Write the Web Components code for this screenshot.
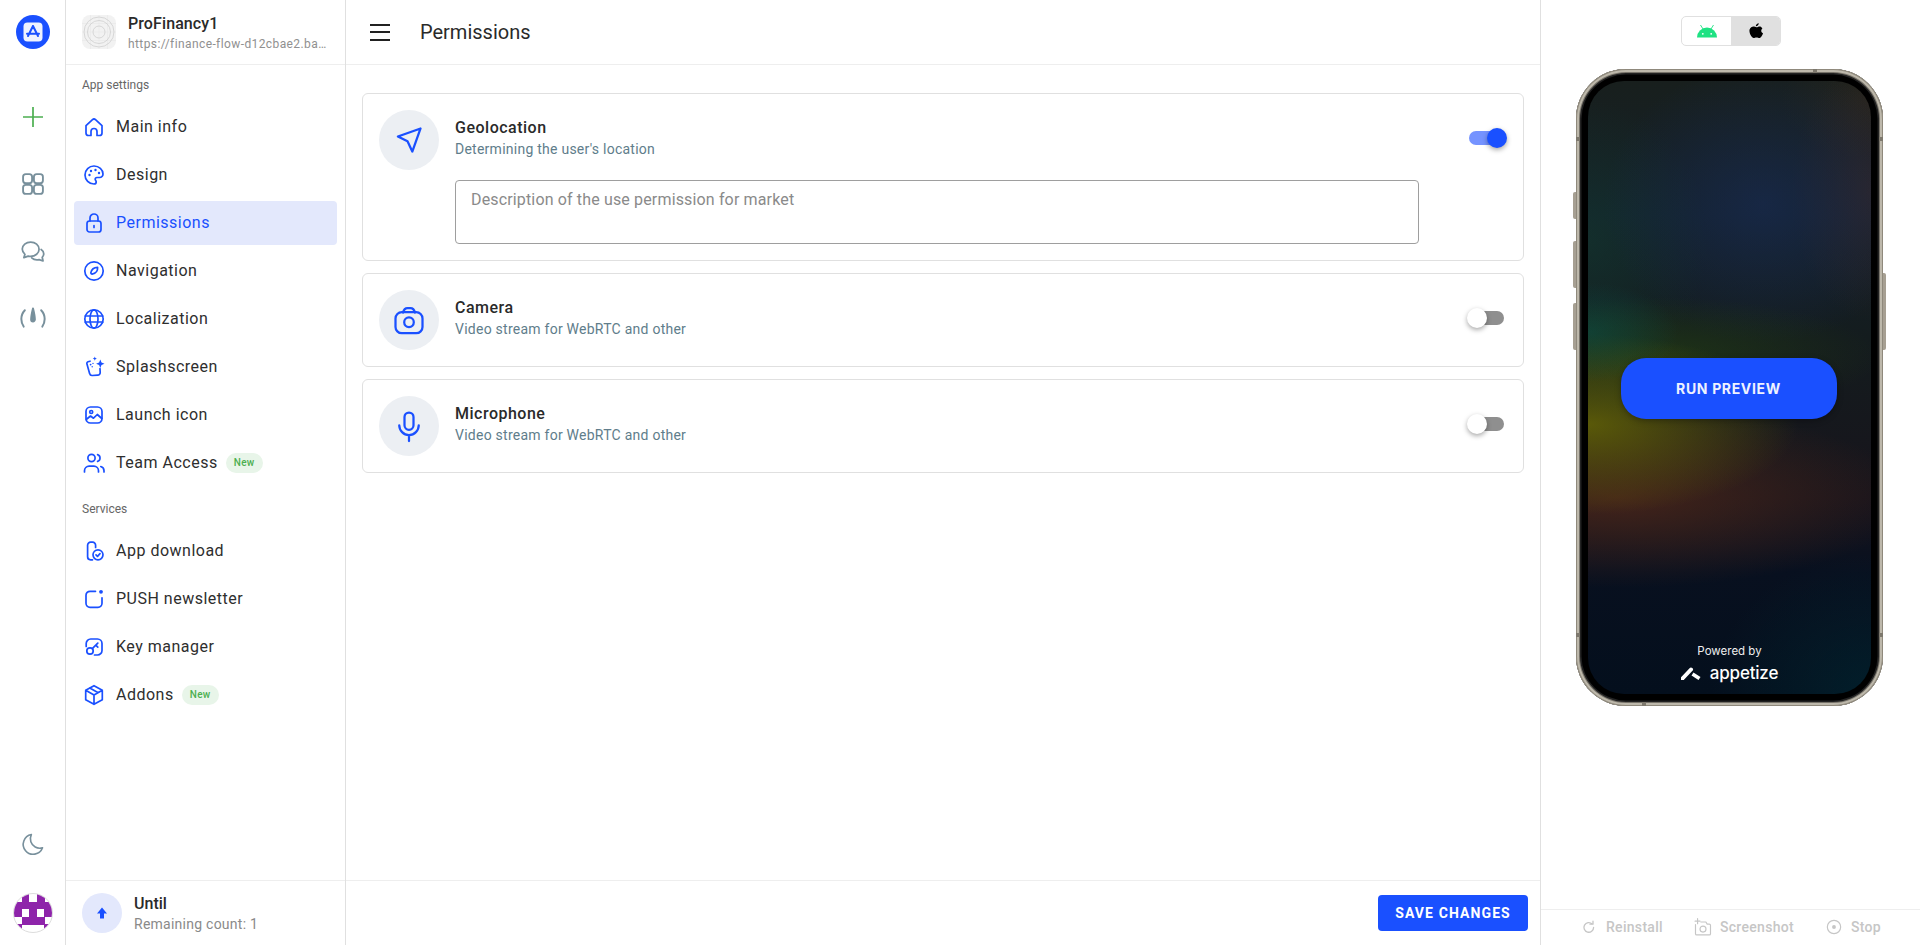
<!DOCTYPE html>
<html lang="en">
<head>
<meta charset="utf-8">
<title>Permissions</title>
<style>
  html, body { margin: 0; padding: 0; background: #fff; font-family: Roboto, "Liberation Sans", sans-serif; color: #2a2a2a; }
</style>
</head>
<body>
<app-shell></app-shell>
<script>
const BLUE = '#1a50ff';

const ICONS = {
  home: '<path d="M4 10.6 10.5 4.7a2.2 2.2 0 0 1 3 0L20 10.6V18a2.5 2.5 0 0 1-2.5 2.5H15V16.5a3 3 0 0 0-6 0v4H6.5A2.5 2.5 0 0 1 4 18z"/>',
  palette: '<path d="M12 3a9 9 0 1 0 0 18c1.4 0 2.2-.9 2.2-2 0-1.3-1-1.6-1-2.8 0-1 .8-1.7 1.8-1.7h2.6A3.4 3.4 0 0 0 21 11c0-4.5-4-8-9-8z"/><g fill="currentColor" stroke="none"><circle cx="7.5" cy="12" r="1.2"/><circle cx="9" cy="8" r="1.2"/><circle cx="13.5" cy="7" r="1.2"/><circle cx="17" cy="10" r="1.2"/></g>',
  lock: '<rect x="5" y="10" width="14" height="11" rx="2.5"/><path d="M8 10V7a4 4 0 0 1 8 0v3M12 14.5v2"/>',
  compass: '<circle cx="12" cy="12" r="9.2"/><path d="M15.6 8.4c.2 3.3-1.5 6-5.6 6.7-.8-.1-1.1-.4-1.2-1.2.7-3.4 3.1-5.5 6.8-5.5z"/>',
  globe: '<circle cx="12" cy="12" r="9.2"/><ellipse cx="12" cy="12" rx="4" ry="9.2"/><path d="M3.2 9h17.6M3.2 15h17.6"/>',
  splash: '<path d="M8 6.2 6 6.8a1.6 1.6 0 0 0-1.1 2l2.7 9.8a2.6 2.6 0 0 0 2.7 1.9l5.4-.3a2.6 2.6 0 0 0 2.5-2.7l-.2-3.8"/><g fill="currentColor" stroke="none"><path d="M18.3 4.5l1.2 3 3 1.2-3 1.2-1.2 3-1.2-3-3-1.2 3-1.2z"/><path d="M12.8 1.5l.6 1.5 1.5.6-1.5.6-.6 1.5-.6-1.5-1.5-.6 1.5-.6z"/><circle cx="8.6" cy="9.6" r=".9"/><circle cx="11" cy="8.4" r=".7"/><circle cx="10.2" cy="11.8" r=".7"/></g>',
  image: '<rect x="4" y="4" width="16" height="16" rx="4.5"/><circle cx="9.2" cy="9" r="1.5"/><path d="M4.2 16.5 8.5 13l3 2.2 3.8-3.7 4.5 4"/>',
  team: '<circle cx="9.5" cy="7" r="3.6"/><path d="M2.5 21v-1.2a4.6 4.6 0 0 1 4.6-4.6h4.8a4.6 4.6 0 0 1 4.6 4.6V21M15.6 3.6a3.6 3.6 0 0 1 0 6.8M18.8 15.5a4.5 4.5 0 0 1 3.2 4.3V21"/>',
  download: '<path d="M10.5 20.8H8.6a3 3 0 0 1-3-3V6.2a3 3 0 0 1 3-3h2a3 3 0 0 1 3 3V8.5"/><circle cx="16" cy="15.8" r="5"/><path d="M14 15.9l1.5 1.5 2.5-2.7"/>',
  push: '<path d="M13.5 4.3H8a4 4 0 0 0-4 4v8a4 4 0 0 0 4 4h8a4 4 0 0 0 4-4v-5.5"/><circle cx="19" cy="4.8" r="1.9" fill="currentColor" stroke="none"/>',
  key: '<path d="M4.2 11.5V8.500A4.500 4.500 0 0 1 8.700 4h6.800A4.500 4.500 0 0 1 20 8.500v7a4.500 4.500 0 0 1-4.500 4.500H12.500"/><circle cx="8" cy="16" r="3.200"/><path d="M10.300 13.700 15.800 8.200M13.800 10.200l2 2"/>',
  box: '<path d="M12 2.700 20.300 7.300V16.700L12 21.300 3.700 16.700V7.300zM3.700 7.300 12 12l8.300-4.700M12 12v9.300M7.800 5 16.200 9.700"/>',
  grid: '<rect x="3.500" y="3.500" width="7.700" height="7.700" rx="2.300"/><rect x="12.800" y="3.500" width="7.700" height="7.700" rx="2.300"/><rect x="3.500" y="12.800" width="7.700" height="7.700" rx="2.300"/><rect x="12.800" y="12.800" width="7.700" height="7.700" rx="2.300"/>',
  chat: '<path d="M10 3.500c-4 0-7.200 2.600-7.200 6 0 1.800.9 3.400 2.300 4.500l-.9 2.800 3.700-1.300c.7.200 1.400.2 2.100.2 4 0 7.200-2.700 7.200-6.100s-3.200-6.100-7.200-6.100z"/><path d="M19 9.800c1.400.9 2.200 2.200 2.200 3.700 0 1.100-.5 2.200-1.300 3l.7 3.200-3.400-1.200c-2.300.5-4.800-.1-6.300-1.500"/>',
  gauge: '<path d="M5 4.500A11 11 0 0 0 2 12c0 2.300.7 4.500 2 6.500M19 4.500a11 11 0 0 1 3 7.500c0 2.300-.7 4.500-2 6.500"/><path d="M12 3c-.8 3.200-1.600 6.500-1.600 9.500a1.600 1.600 0 0 0 3.200 0c0-3-.8-6.300-1.600-9.500z" fill="currentColor"/>',
  moon: '<path d="M10.500 3.200a9.200 9.200 0 1 0 10.300 12.300c-5 1.400-9.500-1.500-10.800-5.500-.7-2.300-.5-4.700.5-6.800z"/>',
  navigation: '<path d="M19.700 4.300 4.600 9.700 11 12.900l3.200 6.800z"/>',
  camera: '<rect x="3" y="6.800" width="18" height="14" rx="4.200"/><path d="M8 7c.5-2 1.500-3 3-3h2c1.500 0 2.500 1 3 3"/><circle cx="12" cy="13.500" r="3.200"/>',
  mic: '<rect x="9" y="3" width="6" height="11.500" rx="3"/><path d="M5.500 11.500a6.500 6.500 0 0 0 13 0M12 18v4"/>',
  reload: '<path d="M17.500 12.500a5.800 5.800 0 1 1-1.800-4.200"/><path d="M16.800 5v3.600h-3.600"/>',
  shot: '<path d="M3 9v11a1.500 1.500 0 0 0 1.500 1.500h15A1.500 1.500 0 0 0 21 20V10a1.500 1.500 0 0 0-1.500-1.500H17l-1.500-2.500h-6"/><circle cx="12" cy="14.500" r="3.600"/><path d="M5.500 2v6M2.500 5h6"/>',
  stop: '<circle cx="12" cy="12" r="8"/><circle cx="12" cy="12" r="2.300" fill="currentColor" stroke="none"/>'
};

function icon(name, size, width) {
  return `<svg width="${size}" height="${size}" viewBox="0 0 24 24" fill="none" stroke="currentColor" stroke-width="${width || 1.6}" stroke-linecap="round" stroke-linejoin="round" aria-hidden="true">${ICONS[name]}</svg>`;
}

class AppShell extends HTMLElement {
  constructor() {
    super();
    this.shadowDOM = this.attachShadow({ mode: 'open' });
  }

  connectedCallback() {
    this.shadowDOM.innerHTML = `
      <style>
        :host { display: flex; width: 100%; height: 945px; overflow: hidden; background: #fff; }
      </style>
      <icon-rail></icon-rail>
      <side-nav></side-nav>
      <permissions-page></permissions-page>
      <phone-preview></phone-preview>
    `;
  }
}

class IconRail extends HTMLElement {
  constructor() {
    super();
    this.shadowDOM = this.attachShadow({ mode: 'open' });
  }

  connectedCallback() {
    const cells = ['01010', '11111', '10101', '01110', '10001'];
    let rects = '';
    cells.forEach((row, y) => {
      [...row].forEach((c, x) => {
        if (c === '1') rects += `<rect x="${x}" y="${y}" width="1.02" height="1.02"/>`;
      });
    });
    this.shadowDOM.innerHTML = `
      <style>
        :host { display: flex; flex-direction: column; align-items: center; box-sizing: border-box; width: 66px; flex: none; height: 945px; padding: 15px 0 12px; border-right: 1px solid #e0e0e0; color: #78909c; }
        .logo { width: 34px; height: 34px; display: block; }
        .list { display: flex; flex-direction: column; margin-top: 34px; }
        .item { height: 67px; display: flex; align-items: center; justify-content: center; }
        .low { padding-top: 2px; height: 65px; }
        .plus { color: #4caf50; }
        .spacer { flex: 1; }
        .moon { height: 28px; display: flex; align-items: center; margin-bottom: 35px; }
        .avatar { width: 40px; height: 40px; border-radius: 50%; overflow: hidden; border: 1px solid #ddd; box-sizing: border-box; background: #fff; }
        .avatar svg { display: block; width: 100%; height: 100%; }
      </style>
      <svg class="logo" viewBox="0 0 34 34" aria-hidden="true">
        <circle cx="17" cy="17" r="17" fill="${BLUE}"/>
        <rect x="7.500" y="7.500" width="19" height="19" rx="4" fill="#eef2ff"/>
        <path d="M17 11l-5 10M17 11l5 10M11 18.800h12" stroke="${BLUE}" stroke-width="2" stroke-linecap="round" fill="none"/>
      </svg>
      <div class="list">
        <div class="item plus"><svg width="24" height="24" viewBox="0 0 24 24" aria-hidden="true"><path d="M12 2v20M2 12h20" stroke="currentColor" stroke-width="1.7" fill="none"/></svg></div>
        <div class="item">${icon('grid', 28, 1.6)}</div>
        <div class="item low">${icon('chat', 28, 1.5)}</div>
        <div class="item low">${icon('gauge', 28, 1.7)}</div>
      </div>
      <div class="spacer"></div>
      <div class="moon">${icon('moon', 26, 1.5)}</div>
      <div class="avatar"><svg viewBox="0 0 5 5" fill="#8e24aa" shape-rendering="crispEdges" aria-hidden="true">${rects}</svg></div>
    `;
  }
}

class NavItem extends HTMLElement {
  constructor() {
    super();
    this.shadowDOM = this.attachShadow({ mode: 'open' });
  }

  connectedCallback() {
    const badge = this.hasAttribute('badge') ? `<span class="badge">${this.getAttribute('badge')}</span>` : '';
    this.shadowDOM.innerHTML = `
      <style>
        :host { display: flex; align-items: center; gap: 10px; height: 44px; box-sizing: border-box; margin: 0 8px 4px; padding: 0 8px; border-radius: 4px; color: #2e2e2e; font-size: 16px; letter-spacing: 0.5px; }
        :host([active]) { background: #e3e8fc; color: ${BLUE}; }
        .ico { color: ${BLUE}; width: 24px; height: 24px; flex: none; display: block; }
        .ico svg { display: block; }
        .label { line-height: 20px; }
        .badge { margin-left: -2px; height: 20px; width: 37px; border-radius: 10px; background: #e8f5e9; color: #4caf50; font-size: 10px; font-weight: 500; line-height: 20px; text-align: center; letter-spacing: 0.3px; }
      </style>
      <span class="ico">${icon(this.getAttribute('icon'), 24, 1.7)}</span>
      <span class="label"><slot></slot></span>
      ${badge}
    `;
  }
}

class SideNav extends HTMLElement {
  constructor() {
    super();
    this.shadowDOM = this.attachShadow({ mode: 'open' });
  }

  connectedCallback() {
    this.shadowDOM.innerHTML = `
      <style>
        :host { display: flex; flex-direction: column; width: 280px; flex: none; height: 945px; box-sizing: border-box; border-right: 1px solid #e0e0e0; }
        .head { height: 65px; box-sizing: border-box; flex: none; display: flex; align-items: center; gap: 12px; padding: 0 16px; border-bottom: 1px solid #eeeeee; }
        .thumb { width: 34px; height: 34px; flex: none; display: block; }
        .head-text { min-width: 0; flex: 1; padding-top: 2px; }
        .name { font-size: 16px; line-height: 20px; font-weight: 500; letter-spacing: 0.1px; }
        .url { font-size: 12px; line-height: 16px; margin-top: 2px; color: #909090; letter-spacing: 0.4px; white-space: nowrap; }
        .section { font-size: 12px; line-height: 16px; color: #666; padding-left: 16px; }
        .s1 { margin: 12px 0 12px; }
        .s2 { margin: 16px 0 12px; }
        .menu { flex: 1; }
        .foot { height: 65px; box-sizing: border-box; flex: none; display: flex; align-items: center; gap: 12px; padding: 0 16px; border-top: 1px solid #eeeeee; }
        .up { width: 40px; height: 40px; border-radius: 50%; background: #e3e8fc; display: flex; align-items: center; justify-content: center; flex: none; }
        .foot-text { padding-top: 2px; }
        .until { font-size: 16px; line-height: 20px; font-weight: 500; }
        .remain { font-size: 14px; line-height: 20px; color: #8a8a8a; letter-spacing: 0.25px; }
      </style>
      <div class="head">
        <svg class="thumb" viewBox="0 0 34 34" aria-hidden="true">
          <rect width="34" height="34" rx="8" fill="#f2f2f2"/>
          <path d="M0 8.500h34M0 17h34M0 25.500h34M8.500 0v34M17 0v34M25.500 0v34" stroke="#e8e8e8" stroke-width="0.6"/>
          <g fill="none" stroke="#cfcfcf" stroke-width="0.8"><circle cx="17" cy="17" r="15"/><circle cx="17" cy="17" r="11.500"/><circle cx="17" cy="17" r="6"/></g>
        </svg>
        <div class="head-text">
          <div class="name">ProFinancy1</div>
          <div class="url">https://finance-flow-d12cbae2.ba…</div>
        </div>
      </div>
      <div class="menu">
        <div class="section s1">App settings</div>
        <nav-item icon="home">Main info</nav-item>
        <nav-item icon="palette">Design</nav-item>
        <nav-item icon="lock" active>Permissions</nav-item>
        <nav-item icon="compass">Navigation</nav-item>
        <nav-item icon="globe">Localization</nav-item>
        <nav-item icon="splash">Splashscreen</nav-item>
        <nav-item icon="image">Launch icon</nav-item>
        <nav-item icon="team" badge="New">Team Access</nav-item>
        <div class="section s2">Services</div>
        <nav-item icon="download">App download</nav-item>
        <nav-item icon="push">PUSH newsletter</nav-item>
        <nav-item icon="key">Key manager</nav-item>
        <nav-item icon="box" badge="New">Addons</nav-item>
      </div>
      <div class="foot">
        <div class="up"><svg width="14" height="14" viewBox="0 0 14 14" aria-hidden="true"><path d="M7 1.500 12 7.500H9V12.500H5V7.500H2z" fill="${BLUE}"/></svg></div>
        <div class="foot-text">
          <div class="until">Until</div>
          <div class="remain">Remaining count: 1</div>
        </div>
      </div>
    `;
  }
}

class ToggleSwitch extends HTMLElement {
  constructor() {
    super();
    this.shadowDOM = this.attachShadow({ mode: 'open' });
  }

  connectedCallback() {
    this.shadowDOM.innerHTML = `
      <style>
        :host { display: block; position: relative; width: 58px; height: 38px; flex: none; }
        .track { position: absolute; left: 12px; top: 12px; width: 34px; height: 14px; border-radius: 7px; background: #8f8f8f; }
        .thumb { position: absolute; left: 9px; top: 9px; width: 20px; height: 20px; border-radius: 50%; background: #fff; box-shadow: 0 2px 5px rgba(0,0,0,.35); }
        :host([checked]) .track { left: 11px; background: #7593ff; }
        :host([checked]) .thumb { left: 29px; background: ${BLUE}; }
      </style>
      <div class="track"></div>
      <div class="thumb"></div>
    `;
  }
}

class PermissionCard extends HTMLElement {
  constructor() {
    super();
    this.shadowDOM = this.attachShadow({ mode: 'open' });
  }

  connectedCallback() {
    const checked = this.hasAttribute('checked') ? 'checked' : '';
    this.shadowDOM.innerHTML = `
      <style>
        :host { display: block; box-sizing: border-box; border: 1px solid #e0e0e0; border-radius: 6px; padding: 16px; }
        .row { display: flex; align-items: flex-start; gap: 16px; }
        .circle { width: 60px; height: 60px; border-radius: 50%; background: #eceff3; color: ${BLUE}; display: flex; align-items: center; justify-content: center; flex: none; }
        .text { flex: 1; padding-top: 7px; }
        .title { font-size: 16px; line-height: 22px; font-weight: 500; letter-spacing: 0.5px; color: #2a2a2a; }
        .sub { font-size: 14px; line-height: 20px; color: #607d8b; letter-spacing: 0.25px; }
        toggle-switch { margin: 9px -9px 0 0; }
        ::slotted(*) { margin: 10px 88px 0 76px; }
      </style>
      <div class="row">
        <div class="circle">${icon(this.getAttribute('icon'), 36, 1.5)}</div>
        <div class="text">
          <div class="title">${this.getAttribute('name')}</div>
          <div class="sub">${this.getAttribute('desc')}</div>
        </div>
        <toggle-switch ${checked}></toggle-switch>
      </div>
      <slot></slot>
    `;
  }
}

class DescField extends HTMLElement {
  constructor() {
    super();
    this.shadowDOM = this.attachShadow({ mode: 'open' });
  }

  connectedCallback() {
    this.shadowDOM.innerHTML = `
      <style>
        :host { display: block; box-sizing: border-box; height: 64px; border: 1px solid #9e9e9e; border-radius: 4px; padding: 9px 15px; color: #8a8a8a; font-size: 16px; line-height: 20px; letter-spacing: 0.15px; }
      </style>
      <slot></slot>
    `;
  }
}

class PermissionsPage extends HTMLElement {
  constructor() {
    super();
    this.shadowDOM = this.attachShadow({ mode: 'open' });
  }

  connectedCallback() {
    this.shadowDOM.innerHTML = `
      <style>
        :host { display: flex; flex-direction: column; width: 1195px; flex: none; height: 945px; box-sizing: border-box; border-right: 1px solid #e0e0e0; }
        .top { height: 65px; box-sizing: border-box; flex: none; display: flex; align-items: center; gap: 30px; padding-left: 24px; border-bottom: 1px solid #eeeeee; }
        .burger { width: 20px; display: flex; flex-direction: column; gap: 5.5px; }
        .burger i { display: block; height: 2px; background: #212121; }
        h1 { margin: 0; font-size: 20px; line-height: 28px; font-weight: 400; letter-spacing: 0; color: #2a2a2a; }
        .body { flex: 1; padding: 28px 16px 0; display: flex; flex-direction: column; gap: 12px; }
        .bottom { height: 65px; box-sizing: border-box; flex: none; display: flex; align-items: center; justify-content: flex-end; padding-right: 12px; border-top: 1px solid #eeeeee; }
        button { width: 150px; height: 36px; border: 0; border-radius: 4px; background: ${BLUE}; color: #fff; font: 700 14px/36px Roboto, "Liberation Sans", sans-serif; letter-spacing: 1.1px; padding: 0; }
      </style>
      <div class="top">
        <div class="burger"><i></i><i></i><i></i></div>
        <h1>Permissions</h1>
      </div>
      <div class="body">
        <permission-card icon="navigation" name="Geolocation" desc="Determining the user's location" checked>
          <desc-field>Description of the use permission for market</desc-field>
        </permission-card>
        <permission-card icon="camera" name="Camera" desc="Video stream for WebRTC and other"></permission-card>
        <permission-card icon="mic" name="Microphone" desc="Video stream for WebRTC and other"></permission-card>
      </div>
      <div class="bottom"><button>SAVE CHANGES</button></div>
    `;
  }
}

class PhonePreview extends HTMLElement {
  constructor() {
    super();
    this.shadowDOM = this.attachShadow({ mode: 'open' });
  }

  connectedCallback() {
    this.shadowDOM.innerHTML = `
      <style>
        :host { display: flex; flex-direction: column; flex: 1; height: 945px; box-sizing: border-box; }
        .stage { flex: 1; display: flex; flex-direction: column; padding-top: 16px; }
        .os { align-self: flex-start; margin-left: 140px; width: 100px; height: 30px; display: flex; box-sizing: border-box; border: 1px solid #e0e0e0; border-radius: 5px; overflow: hidden; }
        .os span { flex: 1; display: flex; align-items: center; justify-content: center; }
        .os .on { background: #e0e0e0; }
        .phone { position: relative; width: 307px; height: 637px; margin: 23px 0 0 35px; box-sizing: border-box; border-radius: 50px; background: #000; box-shadow: inset 0 0 0 1px #8f897c, inset 0 0 0 3px #bdb8ab, inset 0 0 0 4px #77736a, inset 0 0 0 5.5px #222; padding: 12px; }
        .btn { position: absolute; width: 3px; background: #a69f92; }
        .left { left: -3px; border-radius: 2px 0 0 2px; }
        .right { right: -3px; border-radius: 0 2px 2px 0; }
        .band { position: absolute; background: #7d786d; }
        .screen { width: 283px; height: 613px; border-radius: 36px; overflow: hidden; position: relative; display: flex; align-items: center; justify-content: center;
          background:
            radial-gradient(ellipse 90px 50px at 0% 41%, rgba(10,85,75,.5), transparent),
            radial-gradient(ellipse 210px 90px at 0% 56%, rgba(100,100,5,.85), transparent),
            radial-gradient(ellipse 300px 90px at 10% 68%, rgba(85,42,25,.72), transparent),
            radial-gradient(ellipse 220px 60px at 25% 45%, rgba(40,75,15,.5), transparent),
            radial-gradient(ellipse 160px 140px at 62% 20%, rgba(26,45,90,.55), transparent),
            radial-gradient(ellipse 80px 130px at 100% 18%, rgba(85,45,40,.35), transparent),
            radial-gradient(ellipse 90px 60px at 100% 3%, rgba(70,50,30,.25), transparent),
            radial-gradient(ellipse 120px 140px at 0% 26%, rgba(20,70,50,.38), transparent),
            radial-gradient(ellipse 160px 140px at 100% 100%, rgba(0,45,55,.5), transparent),
            linear-gradient(180deg, #181f1d 0%, #13202a 22%, #141c1e 42%, #17141c 68%, #08101f 80%, #040f1d 100%);
        }
        .run { width: 216px; height: 61px; margin: 2px 2px 0 0; border-radius: 25px; background: ${BLUE}; color: #eef2ff; display: flex; align-items: center; justify-content: center; font: 700 14px Inter, Roboto, sans-serif; letter-spacing: 0.65px; box-shadow: 0 2px 6px rgba(0,0,0,.3); }
        .powered { position: absolute; left: 0; right: 0; bottom: 9px; display: flex; flex-direction: column; align-items: center; color: #fff; }
        .by { font: 400 11.5px/14px Inter, sans-serif; color: #eee; }
        .brand { display: flex; align-items: center; gap: 9px; margin-top: 3px; font: 500 17px/24px Inter, sans-serif; letter-spacing: -0.2px; }
        .foot { height: 36px; box-sizing: border-box; flex: none; display: flex; align-items: center; gap: 30px; padding: 0 0 2px 38px; border-top: 1px solid #eeeeee; color: #c6c6c6; font-size: 14px; font-weight: 500; letter-spacing: 0.3px; }
        .foot div { display: flex; align-items: center; gap: 7px; }
        .foot svg { display: block; }
      </style>
      <div class="stage">
        <div class="os">
          <span>
            <svg width="22" height="14" viewBox="0 0 22 14" aria-hidden="true"><path d="M1 13.500A10 10 0 0 1 21 13.500z" fill="#1ee283"/><path d="M4.500 1 7 5M17.500 1 15 5" stroke="#1ee283" stroke-width="0.9"/><circle cx="6.800" cy="9.800" r="0.9" fill="#fff"/><circle cx="15.200" cy="9.800" r="0.9" fill="#fff"/></svg>
          </span>
          <span class="on">
            <svg width="14" height="16" viewBox="0 0 14 16" aria-hidden="true"><path d="M9.800 0.200c.1 1.700-1.300 3.200-3 3.100-.1-1.600 1.400-3 3-3.100zM13.400 5.500c-1.800 1.200-1.500 3.900.6 4.700-.5 1.500-2 4.800-3.700 4.800-.9 0-1.500-.6-2.800-.6s-1.900.6-2.800.6C2.700 15-.3 9.700.6 6.500 1.500 3.700 4.300 3 5.900 3.800c.8.300 1.200.5 1.600.5.400 0 .9-.2 1.800-.6 1.500-.6 3.200-.1 4.100 1.800z" fill="#000"/></svg>
          </span>
        </div>
        <div class="phone">
          <i class="btn left" style="top:123px;height:27px"></i>
          <i class="btn left" style="top:172px;height:47px"></i>
          <i class="btn left" style="top:234px;height:47px"></i>
          <i class="btn right" style="top:204px;height:77px"></i>
          <i class="band" style="left:0;top:68px;width:4px;height:4px"></i>
          <i class="band" style="right:0;top:68px;width:4px;height:4px"></i>
          <i class="band" style="left:0;bottom:69px;width:4px;height:4px"></i>
          <i class="band" style="right:0;bottom:69px;width:4px;height:4px"></i>
          <i class="band" style="top:0;right:66px;width:4px;height:4px"></i>
          <i class="band" style="bottom:0;left:66px;width:4px;height:4px"></i>
          <div class="screen">
            <div class="run">RUN PREVIEW</div>
            <div class="powered">
              <div class="by">Powered by</div>
              <div class="brand">
                <svg width="20" height="13" viewBox="0 0 20 13" aria-hidden="true"><path d="M1.500 11.500 10 2.500" stroke="#fff" stroke-width="4" stroke-linecap="round" fill="none"/><path d="M11.500 7 18.500 11.500" stroke="#fff" stroke-width="3.6" fill="none"/></svg>
                <span>appetize</span>
              </div>
            </div>
          </div>
        </div>
      </div>
      <div class="foot">
        <div>${icon('reload', 20, 1.6)}<span>Reinstall</span></div>
        <div>${icon('shot', 20, 1.4)}<span>Screenshot</span></div>
        <div>${icon('stop', 20, 1.4)}<span>Stop</span></div>
      </div>
    `;
  }
}

customElements.define('nav-item', NavItem);
customElements.define('icon-rail', IconRail);
customElements.define('side-nav', SideNav);
customElements.define('toggle-switch', ToggleSwitch);
customElements.define('permission-card', PermissionCard);
customElements.define('desc-field', DescField);
customElements.define('permissions-page', PermissionsPage);
customElements.define('phone-preview', PhonePreview);
customElements.define('app-shell', AppShell);
</script>
</body>
</html>
